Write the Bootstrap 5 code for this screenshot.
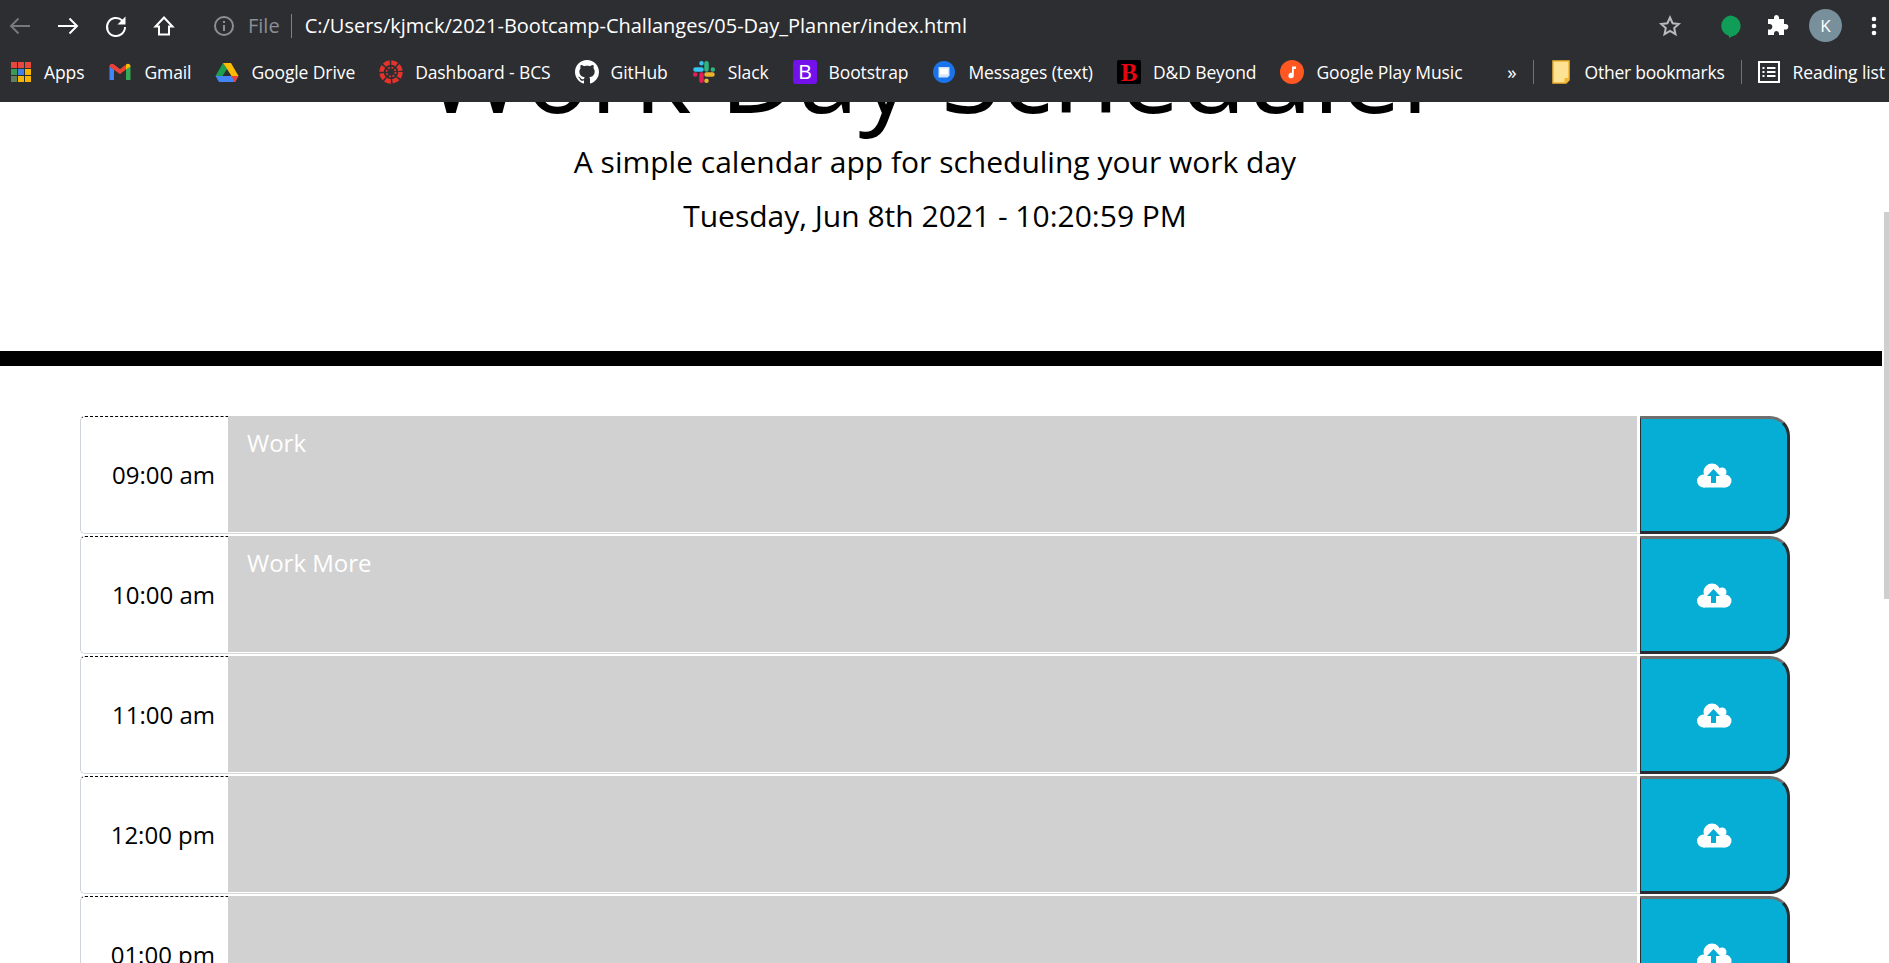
<!DOCTYPE html>
<html>
<head>
    <title>Work Day Scheduler</title>
    <link href="https://cdn.jsdelivr.net/npm/bootstrap@5.3.0/dist/css/bootstrap.min.css" rel="stylesheet">
    <style>
        html, body { height: 100%; overflow: hidden; }
        body { font-family: "Open Sans", sans-serif; color: #000; background: #fff; }
        .chrome-bar { background: #2d2e32; height: 102px; color: #fff; position: relative; z-index: 2; }
        .tool-row { height: 51px; padding: 0 3px 0 8px; }
        .mark-row { height: 51px; padding: 0 4px 9px 9px; }
        .tool-icon { width: 24px; height: 24px; flex: none; }
        .nav-gap { margin-left: 24px; }
        .info-icon { margin-left: 36px; }
        .star-icon { margin-left: auto; }
        .bubble-icon { margin-left: 36px; }
        .puzzle-icon { margin-left: 23px; }
        .dots-icon { margin-left: 20px; }
        .url-text { font-size: 20px; color: #fff; white-space: nowrap; }
        .file-text { font-size: 20px; color: #8a9096; margin-left: 12px; }
        .url-sep { width: 1px; height: 24px; background: #808080; margin: 0 13px 0 11px; }
        .mark-item { font-size: 17.5px; white-space: nowrap; color: #fff; gap: 12px; letter-spacing: -.1px; margin-left: 24px; }
        .mark-item:first-child { margin-left: 0; gap: 11px; }
        .mark-more { font-size: 19px; margin-left: auto; color: #fff; }
        .mark-other { letter-spacing: -.25px; margin-left: 15px; }
        .mark-read { margin-left: 15px; }
        .mark-icon { width: 24px; height: 24px; flex: none; }
        .mark-sep { width: 1px; height: 24px; background: #6f7175; margin-left: 16px; }
        .avatar-k { width: 33px; height: 33px; background: #78909c; font-size: 17px; margin-left: 20px; flex: none; }
        .page-view { height: 861px; }
        .page-scroll { width: 1882px; flex: none; overflow: hidden; }
        .scroll-track { width: 7px; flex: none; background: #fff; }
        .scroll-thumb { width: 5px; height: 387px; margin: 110px 0 0 2px; background: #cfcfcf; }
        .hero-area { height: 334px; padding-right: 12px; margin-top: -85px; }
        .hero-title { font-size: 108.5px; font-weight: 400; line-height: 1; margin: 0 0 14px; height: 108px; }
        .hero-lead { font-size: 30px; line-height: 45px; margin: 0 0 9px; }
        .hero-date { font-size: 30px; line-height: 45px; margin: 0; }
        .hero-rule { height: 15px; background: #000; }
        .plan-list { padding: 50px 92px 0 80px; }
        .plan-row { height: 120px; }
        .hour-box { width: 148px; height: 118px; font-size: 24px; padding-right: 13px; border: 1px solid #ced4da; border-top: 1px dashed #000; border-right: 0; border-radius: 5px 0 0 5px; flex: none; }
        .task-wrap { height: 118px; padding-right: 3px; border-bottom: 1px solid #d6d9dc; }
        .task-box { display: block; width: 100%; background: #d1d1d1; color: #fff; height: 116px; font-size: 24px; padding: 9px 19px; border: 0; resize: none; }
        .save-btn { width: 150px; height: 118px; flex: none; background: #06aed5; padding: 0; border-style: solid; border-width: 3px; border-color: #6f6f6f #2b2d31 #2b2d31 #2b2d31; border-left-width: 1px; border-radius: 0 20px 20px 0; }
    </style>
</head>
<body>
    <div class="chrome-bar">
        <div class="tool-row d-flex align-items-center">
            <svg class="tool-icon" viewBox="0 0 24 24" fill="none" stroke="#77797d" stroke-width="2"><path d="M22 12H3M10.500 4.500 3 12l7.500 7.500"/></svg>
            <svg class="tool-icon nav-gap" viewBox="0 0 24 24" fill="none" stroke="#fff" stroke-width="2"><path d="M2 12h19M13.500 4.500 21 12l-7.500 7.500"/></svg>
            <svg class="tool-icon nav-gap" viewBox="0 0 24 24" fill="none" stroke="#fff" stroke-width="2"><path d="M21 13a9 9 0 1 1-2.700-6.400"/><path d="M21.500 2.500v8h-8z" fill="#fff" stroke="none"/></svg>
            <svg class="tool-icon nav-gap" viewBox="0 0 24 24" fill="none" stroke="#fff" stroke-width="2"><path d="M12 3.500 3.500 12.500H7V20.500h10v-8h3.500z"/></svg>
            <svg class="tool-icon info-icon" viewBox="0 0 24 24" fill="none" stroke="#8a9096" stroke-width="2"><circle cx="12" cy="12" r="9"/><path d="M12 11v6M12 7v2"/></svg>
            <span class="file-text">File</span>
            <span class="url-sep"></span>
            <span class="url-text">C:/Users/kjmck/2021-Bootcamp-Challanges/05-Day_Planner/index.html</span>
            <svg class="tool-icon star-icon" viewBox="0 0 24 24" fill="none" stroke="#b9babc" stroke-width="2"><path d="M12 3.500l2.600 5.700 6.200.7-4.600 4.200 1.300 6.100L12 17l-5.500 3.200 1.300-6.100-4.600-4.200 6.200-.7z"/></svg>
            <svg class="tool-icon bubble-icon" viewBox="0 0 24 24"><path d="M12 1.500a10.500 10.500 0 0 1 3 20.600L11 24v-2A10.500 10.500 0 0 1 12 1.500z" fill="#0f9d58"/></svg>
            <svg class="tool-icon puzzle-icon" viewBox="0 0 24 24" fill="#fff"><path d="M9 3.500a2.500 2.500 0 0 1 5 0V5h5v5h1.500a2.800 2.800 0 0 1 0 5.600H19V21h-5v-1.500a2.500 2.500 0 0 0-5 0V21H3v-5.400h1.500a2.800 2.800 0 0 0 0-5.600H3V5h6z"/></svg>
            <span class="avatar-k rounded-circle d-flex align-items-center justify-content-center">K</span>
            <svg class="tool-icon dots-icon" viewBox="0 0 24 24" fill="#fff"><circle cx="12" cy="5" r="2.300"/><circle cx="12" cy="12" r="2.300"/><circle cx="12" cy="19" r="2.300"/></svg>
        </div>
        <div class="mark-row d-flex align-items-center">
            <span class="mark-item d-flex align-items-center"><svg class="mark-icon" viewBox="0 0 24 24"><rect x="2" y="2" width="6" height="6" fill="#e8473b"/><rect x="9" y="2" width="6" height="6" fill="#e8473b"/><rect x="16" y="2" width="6" height="6" fill="#e8473b"/><rect x="2" y="9" width="6" height="6" fill="#3a9a55"/><rect x="9" y="9" width="6" height="6" fill="#3f80ea"/><rect x="16" y="9" width="6" height="6" fill="#f4b400"/><rect x="2" y="16" width="6" height="6" fill="#5f7f5f"/><rect x="9" y="16" width="6" height="6" fill="#f4b400"/><rect x="16" y="16" width="6" height="6" fill="#f4b400"/></svg>Apps</span>
            <span class="mark-item d-flex align-items-center"><svg class="mark-icon" viewBox="0 0 24 24"><path d="M1.500 20V6l4.500 3.500V20z" fill="#4285f4"/><path d="M18 20V9.500L22.500 6v14z" fill="#34a853"/><path d="M1.500 6.500C1.500 4 4 3 6 4.500l6 4.700 6-4.700L12 14z" fill="#ea4335"/><path d="M18 9.500l-6 4.500-6-4.500V5l6 4.500L18 5z" fill="#ea4335"/><path d="M18 9.500V4.500c2-1.500 4.500-.5 4.500 2z" fill="#fbbc04"/></svg>Gmail</span>
            <span class="mark-item d-flex align-items-center"><svg class="mark-icon" viewBox="0 0 24 24"><path d="M8 3 .5 16h7L12 9z" fill="#1e9e50"/><path d="M8 3h8l7.500 13h-7L12 9z" fill="#fbbc04"/><path d="M.5 16h23L20 22H4z" fill="#4285f4"/><path d="M16.500 16h7L20 22h-.5z" fill="#ea4335"/></svg>Google Drive</span>
            <span class="mark-item d-flex align-items-center"><svg class="mark-icon" viewBox="0 0 24 24" fill="none" stroke="#e4332d"><circle cx="12" cy="12" r="9.500" stroke-width="4.500" stroke-dasharray="5.900 1.560"/><circle cx="12" cy="12" r="4.500" stroke-width="1.800" stroke-dasharray="1.800 1.730"/></svg>Dashboard - BCS</span>
            <span class="mark-item d-flex align-items-center"><svg class="mark-icon" viewBox="0 0 16 16" fill="#fff"><path d="M8 0C3.580 0 0 3.580 0 8c0 3.540 2.290 6.530 5.470 7.590.4.070.55-.17.55-.38 0-.19-.01-.82-.01-1.490-2.010.37-2.530-.49-2.690-.94-.09-.23-.48-.94-.82-1.130-.28-.15-.68-.52-.01-.53.63-.01 1.080.58 1.230.82.720 1.210 1.870.87 2.330.66.070-.52.280-.87.510-1.070-1.780-.2-3.640-.89-3.640-3.950 0-.87.310-1.590.820-2.150-.08-.2-.36-1.020.08-2.120 0 0 .67-.21 2.200.82.640-.18 1.320-.27 2-.27s1.360.09 2 .27c1.530-1.040 2.200-.82 2.200-.82.440 1.100.16 1.920.08 2.120.51.560.82 1.270.82 2.150 0 3.070-1.870 3.750-3.650 3.950.29.250.54.730.54 1.480 0 1.070-.01 1.930-.01 2.200 0 .21.150.46.550.38A8.010 8.010 0 0 0 16 8c0-4.420-3.580-8-8-8z"/></svg>GitHub</span>
            <span class="mark-item d-flex align-items-center"><svg class="mark-icon" viewBox="0 0 24 24" fill="none" stroke-width="4.500" stroke-linecap="round"><path d="M9.500 3.200v0M3.500 9.500h6" stroke="#36c5f0"/><path d="M14.500 3.200v6.300M20.800 9.500v0" stroke="#2eb67d"/><path d="M20.500 14.500h-6M14.500 20.800v0" stroke="#ecb22e"/><path d="M9.500 20.800V14.500M3.200 14.500v0" stroke="#e01e5a"/></svg>Slack</span>
            <span class="mark-item d-flex align-items-center"><svg class="mark-icon" viewBox="0 0 24 24"><rect width="24" height="24" rx="3" fill="#7311ed"/><text x="12" y="19" text-anchor="middle" font-family="Liberation Sans" font-size="20" fill="#fff">B</text></svg>Bootstrap</span>
            <span class="mark-item d-flex align-items-center"><svg class="mark-icon" viewBox="0 0 24 24"><circle cx="12" cy="12" r="11" fill="#1a73e8"/><path d="M6.500 7h11v8.500l-2 2h-9z" fill="#d2e3fc"/><rect x="8" y="8.500" width="8" height="6" fill="#fff"/></svg>Messages (text)</span>
            <span class="mark-item d-flex align-items-center"><svg class="mark-icon" viewBox="0 0 24 24"><rect width="24" height="24" rx="2" fill="#000"/><text x="12" y="20.500" text-anchor="middle" font-family="Liberation Serif" font-weight="700" font-size="25" fill="#e40712">B</text></svg>D&amp;D Beyond</span>
            <span class="mark-item d-flex align-items-center"><svg class="mark-icon" viewBox="0 0 24 24"><circle cx="12" cy="12" r="12" fill="#ff5722"/><path d="M12 6.500h4v2.400h-2.200v6.600a2.700 2.700 0 1 1-1.800-2.500z" fill="#fff"/></svg>Google Play Music</span>
            <span class="mark-more">»</span>
            <span class="mark-sep"></span>
            <span class="mark-item mark-other d-flex align-items-center"><svg class="mark-icon" viewBox="0 0 24 24"><path d="M4 1h16v19l-3 3H4z" fill="#fde293" stroke="#f2b632" stroke-width="1.500"/><path d="M15.500 23v-5H20v2l-3 3z" fill="#f2b632"/></svg>Other bookmarks</span>
            <span class="mark-sep"></span>
            <span class="mark-item mark-read d-flex align-items-center"><svg class="mark-icon" viewBox="0 0 24 24" fill="none" stroke="#fff" stroke-width="2"><rect x="2" y="2" width="20" height="20"/><path d="M5.500 8h2M10 8h8.500M5.500 12h2M10 12h8.500M5.500 16h2M10 16h8.500"/></svg>Reading list</span>
        </div>
    </div>
    <div class="page-view d-flex">
        <div class="page-scroll">
            <header class="hero-area text-center">
                <h1 class="hero-title">Work Day Scheduler</h1>
                <p class="hero-lead">A simple calendar app for scheduling your work day</p>
                <p class="hero-date">Tuesday, Jun 8th 2021 - 10:20:59 PM</p>
            </header>
            <div class="hero-rule"></div>
            <div class="plan-list" id="planList"></div>
        </div>
        <div class="scroll-track"><div class="scroll-thumb"></div></div>
    </div>
    <script>
        const hours = [
            ['09:00 am', 'Work'],
            ['10:00 am', 'Work More'],
            ['11:00 am', ''],
            ['12:00 pm', ''],
            ['01:00 pm', '']
        ];
        const list = document.getElementById('planList');
        hours.forEach(h => {
            list.innerHTML += `
                <div class="plan-row d-flex">
                    <div class="hour-box d-flex align-items-center justify-content-end">${h[0]}</div>
                    <div class="task-wrap flex-grow-1"><textarea class="task-box">${h[1]}</textarea></div>
                    <button class="save-btn d-flex align-items-center justify-content-center" type="button">
                        <svg width="35" height="25" viewBox="0 0 35 25"><g fill="#fff"><circle cx="15" cy="9" r="8.500"/><circle cx="25" cy="9" r="4.500"/><circle cx="6.500" cy="18" r="6.500"/><circle cx="28" cy="18" r="6.500"/><rect x="6.500" y="12" width="21.500" height="12.500"/></g><path d="M16.500 6l6.500 7h-4v7h-5v-7h-4z" fill="#06aed5"/></svg>
                    </button>
                </div>`;
        });
    </script>
    <script src="https://cdn.jsdelivr.net/npm/bootstrap@5.3.0/dist/js/bootstrap.bundle.min.js"></script>
</body>
</html>
